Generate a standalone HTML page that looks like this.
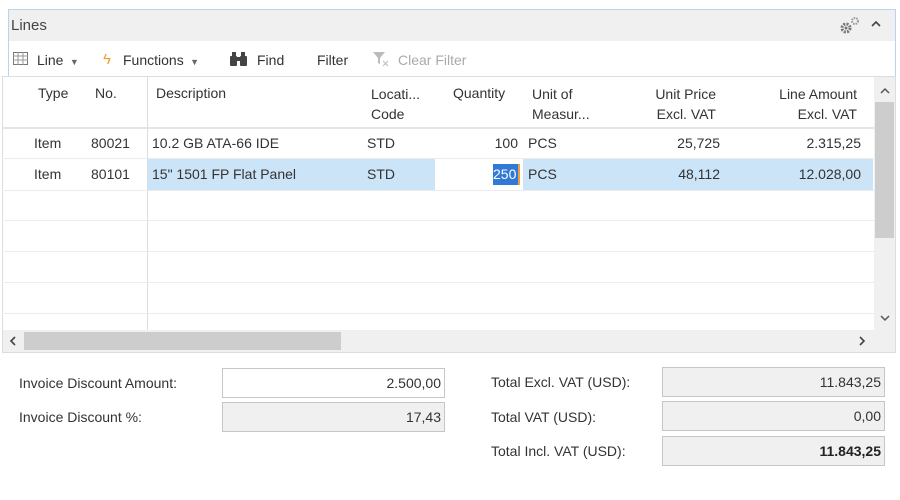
<!DOCTYPE html>
<html><head><style>
body{margin:0;width:900px;height:500px;background:#fff;font-family:"Liberation Sans",sans-serif;font-size:14px;color:#333;position:relative;overflow:hidden}
.a{position:absolute;white-space:nowrap}
.r{text-align:right}
.box{position:absolute;border:1px solid #c6c6c6;box-sizing:border-box;text-align:right;padding:6px 3px 0 0;background:#f0f0f0}
.hl{position:absolute;left:2px;width:872px;height:1px;background:#ececec}
</style></head><body>
<div class="a" style="left:8px;top:9px;width:888px;height:67px;border:1px solid #b9d3ee;border-bottom:none;box-sizing:border-box"></div>
<div class="a" style="left:9px;top:10px;width:886px;height:31px;background:#f0f0f0"></div>
<div class="a" style="left:11px;top:17px;font-size:15px;color:#444">Lines</div>
<svg class="a" style="left:838px;top:14px" width="24" height="22"><circle cx="8" cy="14" r="4" fill="none" stroke="#777" stroke-width="3" stroke-dasharray="2 1.2"/><circle cx="8" cy="14" r="1.5" fill="#777"/><circle cx="17" cy="7" r="3" fill="none" stroke="#999" stroke-width="2" stroke-dasharray="1.5 1"/></svg>
<svg class="a" style="left:871px;top:20px" width="10" height="7"><path d="M1 6l4-4 4 4" fill="none" stroke="#444" stroke-width="1.6"/></svg>
<!-- toolbar -->
<svg class="a" style="left:13px;top:52px" width="16" height="14"><rect x="0.5" y="0.5" width="14" height="12" fill="none" stroke="#777"/><path d="M0 4h15M0 8h15M5 0v13M10 0v13" stroke="#999"/></svg>
<div class="a" style="left:37px;top:52px">Line <span style="font-size:9px;color:#666">&nbsp;▼</span></div>
<div class="a" style="left:103px;top:51px;color:#f0a030;font-size:15px">ϟ</div>
<div class="a" style="left:123px;top:52px">Functions <span style="font-size:9px;color:#666">&nbsp;▼</span></div>
<svg class="a" style="left:229px;top:51px" width="20" height="16"><rect x="1" y="5" width="7" height="10" rx="1" fill="#444"/><rect x="11" y="5" width="7" height="10" rx="1" fill="#444"/><rect x="3" y="1" width="4" height="5" fill="#444"/><rect x="12" y="1" width="4" height="5" fill="#444"/><rect x="7" y="6" width="5" height="4" fill="#444"/></svg>
<div class="a" style="left:257px;top:52px">Find</div>
<div class="a" style="left:317px;top:52px">Filter</div>
<svg class="a" style="left:372px;top:50px" width="18" height="18"><path d="M1 2h12l-5 6v6l-2-1v-5z" fill="#bbb"/><path d="M11 11l5 5M16 11l-5 5" stroke="#bbb"/></svg>
<div class="a" style="left:398px;top:52px;color:#aaa">Clear Filter</div>
<!-- grid -->
<div class="a" style="left:2px;top:76px;width:894px;height:277px;border:1px solid #ddd;box-sizing:border-box"></div>
<div class="a" style="left:147px;top:77px;width:1px;height:253px;background:#ddd"></div>
<div class="a" style="left:2px;top:127px;width:872px;height:2px;background:#e4e4e4"></div>
<div class="a" style="left:148px;top:159px;width:287px;height:31px;background:#cce4f7"></div>
<div class="a" style="left:523px;top:159px;width:350px;height:31px;background:#cce4f7"></div>
<div class="hl" style="top:158px"></div><div class="hl" style="top:190px"></div><div class="hl" style="top:220px"></div><div class="hl" style="top:251px"></div><div class="hl" style="top:282px"></div><div class="hl" style="top:313px"></div>
<div class="a" style="left:38px;top:85px">Type</div>
<div class="a" style="left:95px;top:85px">No.</div>
<div class="a" style="left:156px;top:85px">Description</div>
<div class="a" style="left:371px;top:84px;line-height:20px">Locati...<br>Code</div>
<div class="a" style="left:453px;top:85px">Quantity</div>
<div class="a" style="left:532px;top:84px;line-height:20px">Unit of<br>Measur...</div>
<div class="a r" style="left:630px;width:86px;top:84px;line-height:20px">Unit Price<br>Excl. VAT</div>
<div class="a r" style="left:740px;width:117px;top:84px;line-height:20px">Line Amount<br>Excl. VAT</div>
<div class="a" style="left:34px;top:135px">Item</div><div class="a" style="left:91px;top:135px">80021</div><div class="a" style="left:152px;top:135px">10.2 GB ATA-66 IDE</div><div class="a" style="left:367px;top:135px">STD</div><div class="a r" style="left:440px;width:78px;top:135px">100</div><div class="a" style="left:528px;top:135px">PCS</div><div class="a r" style="left:630px;width:90px;top:135px">25,725</div><div class="a r" style="left:740px;width:121px;top:135px">2.315,25</div>
<div class="a" style="left:34px;top:166px">Item</div><div class="a" style="left:91px;top:166px">80101</div><div class="a" style="left:152px;top:166px">15" 1501 FP Flat Panel</div><div class="a" style="left:367px;top:166px">STD</div>
<div class="a" style="left:493px;top:164px;width:25px;height:21px;background:#3079d6;color:#fff;overflow:hidden;line-height:21px;border-right:2px solid #e8a040">250</div>
<div class="a" style="left:528px;top:166px">PCS</div><div class="a r" style="left:630px;width:90px;top:166px">48,112</div><div class="a r" style="left:740px;width:121px;top:166px">12.028,00</div>
<!-- scrollbars -->
<div class="a" style="left:874px;top:77px;width:21px;height:253px;background:#f0f0f0"></div>
<div class="a" style="left:875px;top:102px;width:19px;height:136px;background:#cdcdcd"></div>
<svg class="a" style="left:880px;top:87px" width="10" height="7"><path d="M1 6l4-4 4 4" fill="none" stroke="#555" stroke-width="1.5"/></svg>
<svg class="a" style="left:880px;top:315px" width="10" height="7"><path d="M1 1l4 4 4-4" fill="none" stroke="#555" stroke-width="1.5"/></svg>
<div class="a" style="left:3px;top:330px;width:892px;height:22px;background:#f0f0f0"></div>
<div class="a" style="left:24px;top:332px;width:317px;height:18px;background:#cdcdcd"></div>
<svg class="a" style="left:9px;top:336px" width="7" height="10"><path d="M6 1l-4 4 4 4" fill="none" stroke="#444" stroke-width="1.6"/></svg>
<svg class="a" style="left:859px;top:336px" width="7" height="10"><path d="M1 1l4 4-4 4" fill="none" stroke="#444" stroke-width="1.6"/></svg>
<!-- totals -->
<div class="a" style="left:19px;top:375px">Invoice Discount Amount:</div>
<div class="box" style="left:222px;top:368px;width:223px;height:30px;background:#fff">2.500,00</div>
<div class="a" style="left:19px;top:409px">Invoice Discount %:</div>
<div class="box" style="left:222px;top:402px;width:223px;height:30px">17,43</div>
<div class="a" style="left:491px;top:374px">Total Excl. VAT (USD):</div>
<div class="box" style="left:662px;top:367px;width:223px;height:30px">11.843,25</div>
<div class="a" style="left:491px;top:409px">Total VAT (USD):</div>
<div class="box" style="left:662px;top:401px;width:223px;height:30px">0,00</div>
<div class="a" style="left:491px;top:443px">Total Incl. VAT (USD):</div>
<div class="box" style="left:662px;top:436px;width:223px;height:30px;font-weight:bold;color:#222">11.843,25</div>
</body></html>
